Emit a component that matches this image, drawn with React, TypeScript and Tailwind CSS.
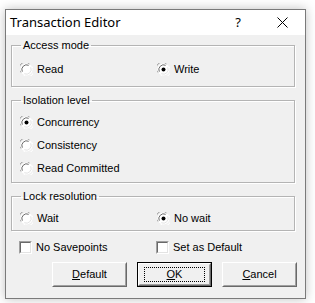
import type { ReactNode } from 'react'

const UI = { fontFamily: '"Liberation Sans", Arial, sans-serif' }

function Radio({ checked }: { checked?: boolean }) {
  return (
    <svg width="13" height="13" viewBox="0 0 13 13" className="shrink-0">
      <circle cx="6.5" cy="6.5" r="6" fill="#ffffff" />
      <path d="M1 9.5 A6 6 0 0 1 9.5 1" fill="none" stroke="#a0a0a0" strokeWidth="1" />
      <path d="M2.3 8.7 A4.8 4.8 0 0 1 8.7 2.3" fill="none" stroke="#696969" strokeWidth="1" />
      <path d="M3.5 12 A6 6 0 0 0 12 3.5" fill="none" stroke="#ffffff" strokeWidth="1" />
      <path d="M4.3 10.7 A4.8 4.8 0 0 0 10.7 4.3" fill="none" stroke="#e3e3e3" strokeWidth="1" />
      {checked && <circle cx="6.5" cy="6.5" r="2" fill="#000000" />}
    </svg>
  )
}

function Check() {
  return (
    <span className="box-border block h-[13px] w-[13px] shrink-0 border border-t-[#a0a0a0] border-l-[#a0a0a0] border-r-white border-b-white">
      <span className="box-border block h-full w-full border border-t-[#696969] border-l-[#696969] border-r-[#e3e3e3] border-b-[#e3e3e3] bg-white" />
    </span>
  )
}

function Option({ label, checked, className = '' }: { label: string; checked?: boolean; className?: string }) {
  return (
    <div className={`flex h-[13px] items-center gap-[4px] ${className}`}>
      <Radio checked={checked} />
      <span className="leading-[13px]">{label}</span>
    </div>
  )
}

function Group({ title, className = '', children }: { title: string; className?: string; children: ReactNode }) {
  return (
    <fieldset
      className={`mx-0 border border-[#b4b4b4] px-0 shadow-[inset_1px_1px_0_#ffffff,1px_1px_0_#ffffff] ${className}`}
    >
      <legend className="ml-[9px] px-[2px] leading-[13px]">{title}</legend>
      {children}
    </fieldset>
  )
}

function Btn({ children, def }: { children: ReactNode; def?: boolean }) {
  return (
    <div className={`box-border h-[25px] w-[75px] ${def ? 'border border-black' : ''}`}>
      <div className="box-border h-full w-full border border-t-white border-l-white border-r-[#696969] border-b-[#696969] bg-[#f0f0f0]">
        <div className="box-border flex h-full w-full items-center justify-center border border-t-[#f0f0f0] border-l-[#f0f0f0] border-r-[#a0a0a0] border-b-[#a0a0a0]">
          {def ? (
            <div className="flex h-[15px] w-[61px] items-center justify-center border border-dotted border-black">
              {children}
            </div>
          ) : (
            children
          )}
        </div>
      </div>
    </div>
  )
}

export default function App() {
  return (
    <div className="h-[303px] w-[315px] bg-white pl-[5px] pt-[9px] text-[11px] text-black" style={UI}>
      <div className="box-border flex h-[290px] w-[301px] flex-col border border-[#7a7a7a] bg-[#f0f0f0] shadow-[0_0_10px_rgba(0,0,0,0.25)]">
        {/* title bar */}
        <div className="flex h-[25px] items-center bg-white pl-[4px]">
          <span className="text-[13px] text-black" style={{ fontFamily: '"Noto Sans", "Open Sans", sans-serif' }}>
            Transaction Editor
          </span>
          <span className="ml-auto mr-[36px] text-[13px]" style={{ fontFamily: '"Noto Sans", sans-serif' }}>
            ?
          </span>
          <svg width="11" height="11" viewBox="0 0 11 11" className="mr-[17px]">
            <path d="M0.5 0.5 L10.5 10.5 M10.5 0.5 L0.5 10.5" stroke="#000000" strokeWidth="1" />
          </svg>
        </div>

        <div className="flex flex-col pl-[5px] pr-[10px] pt-[4px]">
          <Group title="Access mode" className="h-[48px]">
            <div className="mt-[11px] flex pl-[8px]">
              <Option label="Read" className="w-[137px]" />
              <Option label="Write" checked />
            </div>
          </Group>

          <Group title="Isolation level" className="mt-[7px] h-[89px]">
            <div className="mt-[9px] flex flex-col gap-[10px] pl-[8px]">
              <Option label="Concurrency" checked />
              <Option label="Consistency" />
              <Option label="Read Committed" />
            </div>
          </Group>

          <Group title="Lock resolution" className="mt-[7px] h-[41px]">
            <div className="mt-[9px] flex pl-[8px]">
              <Option label="Wait" className="w-[137px]" />
              <Option label="No wait" checked />
            </div>
          </Group>

          <div className="mt-[8px] flex pl-[8px]">
            <div className="flex w-[137px] items-center gap-[4px]">
              <Check />
              <span>No Savepoints</span>
            </div>
            <div className="flex items-center gap-[4px]">
              <Check />
              <span>Set as Default</span>
            </div>
          </div>

          <div className="mr-[-2px] mt-[6px] flex justify-end gap-[10px]">
            <Btn>
              <span>
                <u>D</u>efault
              </span>
            </Btn>
            <Btn def>
              <span>
                <u>O</u>K
              </span>
            </Btn>
            <Btn>
              <span>
                <u>C</u>ancel
              </span>
            </Btn>
          </div>
        </div>
      </div>
    </div>
  )
}
